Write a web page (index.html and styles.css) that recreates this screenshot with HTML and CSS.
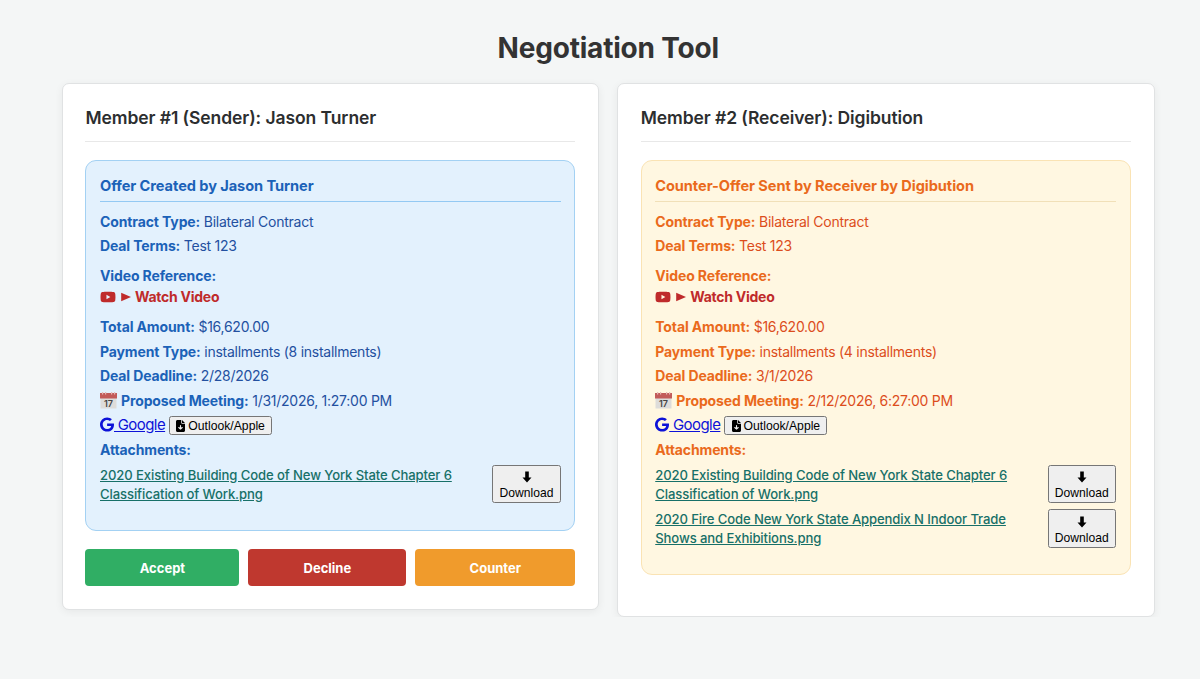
FILE: index.html
```html
<!DOCTYPE html>
<html lang="en">
<head>
    <meta charset="UTF-8">
    <meta name="viewport" content="width=device-width, initial-scale=1.0">
    <title>Negotiation Tool</title>
    <link rel="stylesheet" href="styles.css">
</head>
<body>
    <!-- Shared icons -->
    <svg class="sprite" width="0" height="0">
        <symbol id="icon-youtube" viewBox="0 0 576 512">
            <path d="M549.7 124.1c-6.3-23.7-24.8-42.3-48.3-48.6C458.8 64 288 64 288 64S117.2 64 74.6 75.5c-23.5 6.3-42 24.9-48.3 48.6-11.4 42.9-11.4 132.3-11.4 132.3s0 89.4 11.4 132.3c6.3 23.7 24.8 41.5 48.3 47.8C117.2 448 288 448 288 448s170.8 0 213.4-11.5c23.5-6.3 42-24.2 48.3-47.8 11.4-42.9 11.4-132.3 11.4-132.3s0-89.4-11.4-132.3zM232.2 337.6V175.2l142.7 81.2-142.7 81.2z"/>
        </symbol>
        <symbol id="icon-google" viewBox="0 0 488 512">
            <path d="M488 261.8C488 403.3 391.1 504 248 504 110.8 504 0 393.2 0 256S110.8 8 248 8c66.8 0 123 24.5 166.3 64.9l-67.5 64.9C258.5 52.6 94.3 116.6 94.3 256c0 86.5 69.1 156.6 153.7 156.6 98.2 0 135-70.4 140.8-106.9H248v-85.3h236.1c2.3 12.7 3.9 24.9 3.9 41.4z"/>
        </symbol>
        <symbol id="icon-file" viewBox="0 0 384 512">
            <path d="M0 64C0 28.7 28.7 0 64 0h160v128c0 17.7 14.3 32 32 32h128v288c0 35.3-28.7 64-64 64H64c-35.3 0-64-28.7-64-64V64zM256 0v128h128L256 0zM216 232c0-13.3-10.7-24-24-24s-24 10.7-24 24v102l-31-31c-9.4-9.4-24.6-9.4-33.9 0s-9.4 24.6 0 33.9l72 72c9.4 9.4 24.6 9.4 33.9 0l72-72c9.4-9.4 9.4-24.6 0-33.9s-24.6-9.4-33.9 0l-31 31V232z"/>
        </symbol>
        <symbol id="icon-play" viewBox="0 0 10 10">
            <path d="M.2.8v8.4L10 5z"/>
        </symbol>
        <symbol id="icon-down" viewBox="0 0 10 12">
            <path d="M3.2.5h3.6v6h2.7L5 11.5.5 6.500h2.700z"/>
        </symbol>
    </svg>

    <h1>Negotiation Tool</h1>

    <div class="container">
        <section class="panel">
            <h2>Member #1 (Sender): Jason Turner</h2>

            <div class="offer offer-sent">
                <h3>Offer Created by Jason Turner</h3>
                <p><strong>Contract Type:</strong> Bilateral Contract</p>
                <p><strong>Deal Terms:</strong> Test 123</p>
                <div class="video">
                    <strong>Video Reference:</strong>
                    <a class="watch" href="#"><svg class="yt"><use href="#icon-youtube"/></svg><svg class="play"><use href="#icon-play"/></svg>Watch Video</a>
                </div>
                <p><strong>Total Amount:</strong> $16,620.00</p>
                <p><strong>Payment Type:</strong> installments (8 installments)</p>
                <p><strong>Deal Deadline:</strong> 2/28/2026</p>
                <p class="meeting">
                    <svg class="cal" viewBox="0 0 17 17">
                        <path fill="#dddcda" d="M.5 1h16v15.500H.5z"/>
                        <path fill="#c25b5a" d="M0 1h17v5.500H0z"/>
                        <path fill="#e6b9b6" d="M2 0h1.200v2.500H2zM5 0h1.200v2.500H5zM11 0h1.200v2.500H11zM14 0h1.200v2.500H14z"/>
                        <text x="8.500" y="15" text-anchor="middle">17</text>
                    </svg>
                    <span><strong>Proposed Meeting:</strong> 1/31/2026, 1:27:00 PM</span>
                </p>
                <div class="calendar-links">
                    <a href="#"><svg class="google"><use href="#icon-google"/></svg>&nbsp;Google</a>
                    <button class="outlook"><svg><use href="#icon-file"/></svg>Outlook/Apple</button>
                </div>
                <p><strong>Attachments:</strong></p>
                <div class="attachments">
                    <div class="attachment">
                        <a href="#">2020 Existing Building Code of New York State Chapter 6 Classification of Work.png</a>
                        <button class="download"><svg><use href="#icon-down"/></svg>Download</button>
                    </div>
                </div>
            </div>

            <div class="actions">
                <button class="accept">Accept</button>
                <button class="decline">Decline</button>
                <button class="counter">Counter</button>
            </div>
        </section>

        <section class="panel panel-receiver">
            <h2>Member #2 (Receiver): Digibution</h2>

            <div class="offer offer-counter">
                <h3>Counter-Offer Sent by Receiver by Digibution</h3>
                <p><strong>Contract Type:</strong> Bilateral Contract</p>
                <p><strong>Deal Terms:</strong> Test 123</p>
                <div class="video">
                    <strong>Video Reference:</strong>
                    <a class="watch" href="#"><svg class="yt"><use href="#icon-youtube"/></svg><svg class="play"><use href="#icon-play"/></svg>Watch Video</a>
                </div>
                <p><strong>Total Amount:</strong> $16,620.00</p>
                <p><strong>Payment Type:</strong> installments (4 installments)</p>
                <p><strong>Deal Deadline:</strong> 3/1/2026</p>
                <p class="meeting">
                    <svg class="cal" viewBox="0 0 17 17">
                        <path fill="#dddcda" d="M.5 1h16v15.500H.5z"/>
                        <path fill="#c25b5a" d="M0 1h17v5.500H0z"/>
                        <path fill="#e6b9b6" d="M2 0h1.200v2.500H2zM5 0h1.200v2.500H5zM11 0h1.200v2.500H11zM14 0h1.200v2.500H14z"/>
                        <text x="8.500" y="15" text-anchor="middle">17</text>
                    </svg>
                    <span><strong>Proposed Meeting:</strong> 2/12/2026, 6:27:00 PM</span>
                </p>
                <div class="calendar-links">
                    <a href="#"><svg class="google"><use href="#icon-google"/></svg>&nbsp;Google</a>
                    <button class="outlook"><svg><use href="#icon-file"/></svg>Outlook/Apple</button>
                </div>
                <p><strong>Attachments:</strong></p>
                <div class="attachments">
                    <div class="attachment">
                        <a href="#">2020 Existing Building Code of New York State Chapter 6 Classification of Work.png</a>
                        <button class="download"><svg><use href="#icon-down"/></svg>Download</button>
                    </div>
                    <div class="attachment">
                        <a href="#">2020 Fire Code New York State Appendix N Indoor Trade Shows and Exhibitions.png</a>
                        <button class="download"><svg><use href="#icon-down"/></svg>Download</button>
                    </div>
                </div>
            </div>
        </section>
    </div>
</body>
</html>
```
FILE: styles.css
```css
* {
    box-sizing: border-box;
}
body {
    font-family: Inter, "Liberation Sans", sans-serif;
    margin: 0;
    padding: 30px 45.5px 0 62px;
    background-color: #f4f6f6;
    color: #2c2e2f;
}
h1, h2, h3, p {
    margin: 0;
}
.sprite {
    display: block;
}
svg {
    fill: currentColor;
    flex: none;
}
h1 {
    font-size: 28px;
    line-height: 37px;
    font-weight: 700;
    letter-spacing: -0.2px;
    text-align: center;
    color: #333;
}
.container {
    display: flex;
    align-items: flex-start;
    gap: 18px;
    margin-top: 16px;
}
.panel {
    flex: 1;
    padding: 22px 23px 23px 22.4px;
    background-color: #fff;
    border: 1px solid #e0e2e3;
    border-radius: 7px;
    box-shadow: 0 2px 9px rgba(0, 0, 0, 0.06);
}
.panel-receiver {
    padding-bottom: 41px;
}
h2 {
    font-size: 17.5px;
    line-height: 24px;
    font-weight: 600;
    letter-spacing: -0.08px;
    padding-bottom: 11px;
    border-bottom: 1px solid #e8e8e8;
    margin-bottom: 18px;
}
.offer {
    padding: 14px 13.5px 27px 13.6px;
    border: 1px solid;
    border-radius: 11px;
    font-size: 14px;
    line-height: 21px;
    letter-spacing: -0.26px;
}
.offer-sent {
    background-color: #e3f1fd;
    border-color: #a3d1f3;
    color: #2350a0;
}
.offer-sent h3, .offer-sent strong {
    color: #1b62b8;
}
.offer-counter {
    background-color: #fff7e1;
    border-color: #fae3b4;
    color: #dc4d1c;
}
.offer-counter h3, .offer-counter strong {
    color: #ea6a1c;
}
.offer h3 {
    font-size: 14.6px;
    line-height: 22px;
    font-weight: 700;
    letter-spacing: -0.07px;
    padding-bottom: 4px;
    border-bottom: 1px solid;
    margin-bottom: 8.9px;
}
.offer-sent h3 {
    border-color: #93c9f3;
}
.offer-counter h3 {
    border-color: #f1e0b8;
}
strong {
    font-weight: 700;
    letter-spacing: -0.12px;
}
.offer p {
    margin-bottom: 3.5px;
}
.video {
    display: flex;
    flex-direction: column;
    margin: 9px 0;
}
.watch {
    display: flex;
    align-items: center;
    font-weight: 700;
    color: #bf2b2b;
    text-decoration: none;
}
.yt {
    width: 16px;
    height: 14px;
    margin-right: 5px;
}
.play {
    width: 10px;
    height: 10px;
    margin-right: 4px;
}
.meeting {
    display: flex;
    align-items: center;
}
.cal {
    width: 17px;
    height: 17px;
    margin-right: 4px;
}
.cal text {
    font: 600 9px Inter, sans-serif;
    letter-spacing: 0;
    fill: #444;
}
.calendar-links {
    display: flex;
    align-items: center;
    gap: 4px;
    height: 21px;
    margin-bottom: 4px;
}
.calendar-links a {
    font-size: 15px;
    letter-spacing: -0.55px;
    color: #0d12d8;
}
.google {
    width: 14px;
    height: 15px;
    vertical-align: -2px;
}
.outlook, .download {
    font-family: "Liberation Sans", Arial, sans-serif;
    color: #000;
    background-color: #efefef;
    border: 1px solid #767676;
    border-radius: 2.5px;
    display: flex;
    align-items: center;
    justify-content: center;
    padding: 0;
}
.outlook {
    width: 103px;
    height: 19px;
    margin-top: 2px;
    font-size: 12.2px;
    gap: 3px;
}
.outlook svg {
    width: 9px;
    height: 12px;
}
.attachments {
    padding-top: 1.2px;
    margin-bottom: -0.5px;
}
.attachment {
    display: flex;
    align-items: flex-start;
    justify-content: space-between;
    margin-bottom: 6px;
}
.attachment:last-child {
    margin-bottom: 0;
}
.attachment a {
    width: 365px;
    height: 38.4px;
    padding-top: 0.6px;
    font-size: 13.1px;
    line-height: 19.4px;
    font-weight: 500;
    letter-spacing: -0.11px;
    color: #177068;
}
.download {
    flex-direction: column;
    gap: 3px;
    width: 68.5px;
    height: 38.4px;
    padding-top: 3px;
    font-size: 12.1px;
    line-height: 14px;
}
.download svg {
    width: 10px;
    height: 12px;
}
.actions {
    display: flex;
    gap: 9px;
    margin-top: 18.5px;
}
.actions button {
    height: 36.4px;
    border: none;
    border-radius: 4px;
    padding: 0;
    font-family: Inter, sans-serif;
    font-size: 13px;
    font-weight: 700;
    color: #fff;
}
.accept {
    width: 154px;
    background-color: #30ae64;
}
.decline {
    width: 158px;
    background-color: #bf382f;
}
.counter {
    flex: 1;
    background-color: #f09b2c;
}
```
